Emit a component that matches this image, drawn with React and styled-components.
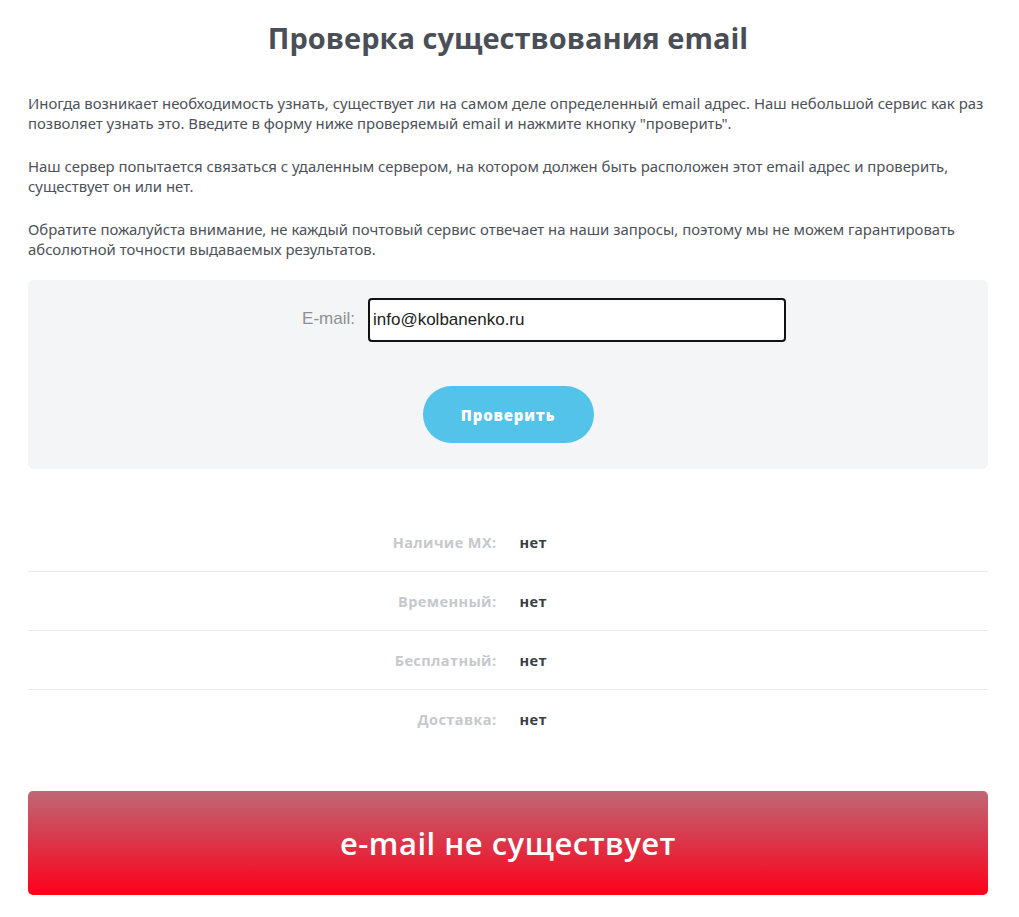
import React from "react";
import styled, { createGlobalStyle } from "styled-components";

const GlobalStyle = createGlobalStyle`
    body {
        margin: 0;
        background: #ffffff;
        font-family: "Noto Sans", "Open Sans", sans-serif;
    }
`;

const results = [
    { label: "Наличие MX:", value: "нет" },
    { label: "Временный:", value: "нет" },
    { label: "Бесплатный:", value: "нет" },
    { label: "Доставка:", value: "нет" },
];

const App = () => {
    return (
        <>
            <GlobalStyle />
            <Page>
                <Title>Проверка существования email</Title>

                <Text>
                    Иногда возникает необходимость узнать, существует ли на самом деле определенный email адрес. Наш небольшой сервис как раз позволяет узнать это. Введите в форму ниже проверяемый email и нажмите кнопку "проверить".
                </Text>
                <Text>
                    Наш сервер попытается связаться с удаленным сервером, на котором должен быть расположен этот email адрес и проверить, существует он или нет.
                </Text>
                <Text>
                    Обратите пожалуйста внимание, не каждый почтовый сервис отвечает на наши запросы, поэтому мы не можем гарантировать абсолютной точности выдаваемых результатов.
                </Text>

                <FormBox>
                    <FieldRow>
                        <Label htmlFor="email">E-mail:</Label>
                        <Input id="email" defaultValue="info@kolbanenko.ru" />
                    </FieldRow>
                    <CheckButton>Проверить</CheckButton>
                </FormBox>

                <Results>
                    {/*one row per check result*/}
                    {results.map((item) => (
                        <ResultRow key={item.label}>
                            <ResultLabel>{item.label}</ResultLabel>
                            <ResultValue>{item.value}</ResultValue>
                        </ResultRow>
                    ))}
                </Results>

                <Verdict>e-mail не существует</Verdict>
            </Page>
        </>
    );
};

const Page = styled.div`
    width: 960px;
    margin: 0 31px 0 28px;
    padding-top: 19px;
    padding-bottom: 22px;
`;

const Title = styled.h1`
    margin: 0 0 36px;
    text-align: center;
    font-family: "Open Sans", sans-serif;
    font-size: 29px;
    font-weight: 700;
    line-height: 38px;
    color: #4a4e56;
`;

const Text = styled.p`
    margin: 0 0 23px;
    font-size: 14.9px;
    line-height: 20px;
    color: #4d5158;

    &:last-of-type {
        margin-bottom: 21px;
    }
`;

const FormBox = styled.div`
    display: flex;
    flex-direction: column;
    align-items: center;
    gap: 44px;
    padding: 18px 0 26px;
    background: #f3f5f6;
    border-radius: 6px;
`;

const FieldRow = styled.div`
    display: grid;
    grid-template-columns: 340px 418px;
    align-items: center;
    align-self: flex-start;
`;

const Label = styled.label`
    padding: 0 13px 2px 0;
    text-align: right;
    font-family: "Liberation Sans", Arial, sans-serif;
    font-size: 17px;
    color: #8d8f92;
`;

const Input = styled.input`
    box-sizing: border-box;
    height: 44px;
    padding: 0 3px;
    border: 2px solid #111;
    border-radius: 4px;
    background: #fff;
    font-family: "Liberation Sans", Arial, sans-serif;
    font-size: 17px;
    color: #222;
    outline: none;
`;

const CheckButton = styled.button`
    width: 171px;
    height: 57px;
    border: none;
    border-radius: 29px;
    background: #53c3ea;
    color: #fff;
    font-family: "Open Sans", sans-serif;
    font-size: 15px;
    font-weight: 800;
    letter-spacing: 0.8px;
    cursor: pointer;
`;

const Results = styled.div`
    display: flex;
    flex-direction: column;
    margin-top: 44px;
`;

const ResultRow = styled.div`
    display: grid;
    grid-template-columns: 1fr 1fr;
    column-gap: 23px;
    align-items: center;
    height: 58px;
    border-bottom: 1px solid #ececec;
    font-family: "Open Sans", sans-serif;
    font-size: 14.5px;
    font-weight: 700;
    letter-spacing: 0.4px;

    &:last-child {
        border-bottom: none;
    }
`;

const ResultLabel = styled.span`
    text-align: right;
    color: #c5c8cc;
`;

const ResultValue = styled.span`
    color: #3a3d42;
`;

const Verdict = styled.div`
    display: flex;
    align-items: center;
    justify-content: center;
    height: 104px;
    margin-top: 43px;
    border-radius: 5px;
    background: linear-gradient(180deg, #c06874 0%, #dc3448 50%, #ff0018 100%);
    color: #fff;
    font-family: "Open Sans", sans-serif;
    font-size: 31px;
    font-weight: 600;
    letter-spacing: 0.5px;
`;

export default App;
